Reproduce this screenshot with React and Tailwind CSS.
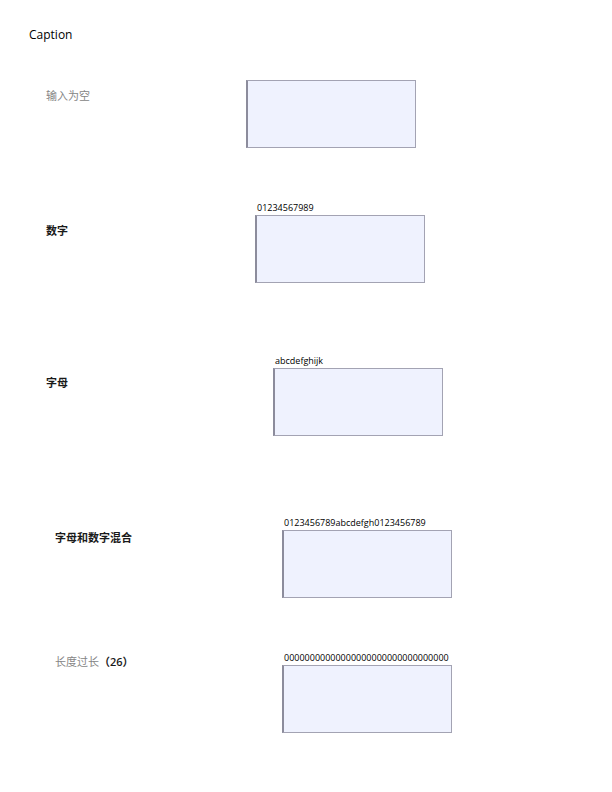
export default function App() {
  const rows = [
    { label: '输入为空', value: null, mt: 'mt-[37px]', w: 'w-[246px]', pl: 'pl-[46px]', pt: 'pt-[8px]', tone: 'text-[#858585]' },
    { label: '数字', value: '01234567989', mt: 'mt-[54px]', w: 'w-[255px]', pl: 'pl-[46px]', pt: 'pt-[21px]', tone: 'text-[#1a1a1a] font-semibold' },
    { label: '字母', value: 'abcdefghijk', mt: 'mt-[72px]', w: 'w-[273px]', pl: 'pl-[46px]', pt: 'pt-[20px]', tone: 'text-[#1a1a1a] font-semibold' },
    { label: '字母和数字混合', value: '0123456789abcdefgh0123456789', mt: 'mt-[81px]', w: 'w-[282px]', pl: 'pl-[55px]', pt: 'pt-[13px]', tone: 'text-[#1a1a1a] font-semibold' },
    { label: 'long', value: '00000000000000000000000000000000', mt: 'mt-[54px]', w: 'w-[282px]', pl: 'pl-[55px]', pt: 'pt-[2px]', tone: 'text-[#858585]' },
  ]

  return (
    <div className="w-[612px] h-[792px] bg-white font-['Open_Sans','Noto_Sans_CJK_SC',sans-serif] overflow-hidden">
      <div className="pt-[27px] pl-[29px] text-[12px] leading-[16px] text-black">Caption</div>

      {rows.map((r, i) => (
        <div key={i} className={`flex ${r.mt}`}>
          <div className={`${r.w} ${r.pl} ${r.pt} shrink-0 text-[11px] leading-[16px] ${r.tone}`}>
            {r.label === 'long' ? (
              <span>
                长度过长<span className="text-[#1a1a1a] font-semibold">（26）</span>
              </span>
            ) : (
              r.label
            )}
          </div>
          <div className="flex flex-col">
            {r.value !== null && (
              <div className="h-[13px] pl-[2px] text-[9px] leading-[11px] text-black whitespace-nowrap">{r.value}</div>
            )}
            <div className="w-[170px] h-[68px] bg-[#eff2fe] border border-[#a3a3b3] border-l-2 border-l-[#8c8c9c]"></div>
          </div>
        </div>
      ))}
    </div>
  )
}
